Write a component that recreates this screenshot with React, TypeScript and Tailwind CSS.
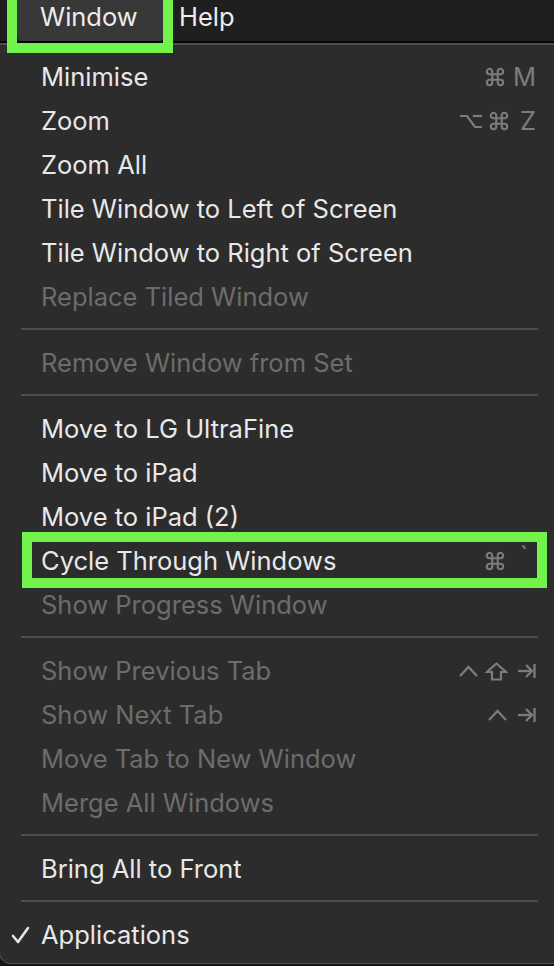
const font = { fontFamily: "Inter, 'Noto Sans', sans-serif" };

function CmdIcon() {
  return (
    <svg width="22" height="20" viewBox="0 0 24 22" fill="none" stroke="currentColor" strokeWidth="2.3" strokeLinecap="round" strokeLinejoin="round">
      <path d="M15 5v12a3 3 0 1 0 3-3H6a3 3 0 1 0 3 3V5a3 3 0 1 0-3 3h12a3 3 0 1 0-3-3" />
    </svg>
  );
}

function OptIcon() {
  return (
    <svg width="22" height="15" viewBox="0 0 22 15" fill="none" stroke="currentColor" strokeWidth="2.2" strokeLinecap="square">
      <path d="M1 2h6l8 11h6" />
      <path d="M14 2h7" />
    </svg>
  );
}

function CtrlIcon() {
  return (
    <svg width="19" height="12" viewBox="0 0 19 12" fill="none" stroke="currentColor" strokeWidth="2.3">
      <path d="M1 11 9.5 2 18 11" />
    </svg>
  );
}

function ShiftIcon() {
  return (
    <svg width="23" height="19" viewBox="0 0 23 19" fill="none" stroke="currentColor" strokeWidth="2.2" strokeLinejoin="miter">
      <path d="M11.5 1.5 21 10h-5v7.5H7V10H2z" />
    </svg>
  );
}

function TabIcon() {
  return (
    <svg width="19" height="16" viewBox="0 0 19 16" fill="none" stroke="currentColor" strokeWidth="2.3">
      <path d="M1 8h14" />
      <path d="M9 2l6 6-6 6" />
      <path d="M17.5 1v14" />
    </svg>
  );
}

function CheckIcon() {
  return (
    <svg width="19" height="18" viewBox="0 0 19 18" fill="none" stroke="currentColor" strokeWidth="2.6" strokeLinecap="round" strokeLinejoin="round">
      <path d="M2 10l5 6L17 2" />
    </svg>
  );
}

type Item = {
  label?: string;
  disabled?: boolean;
  sep?: boolean;
  checked?: boolean;
  marked?: boolean;
  keys?: React.ReactNode;
};

const items: Item[] = [
  {
    label: "Minimise",
    keys: (
      <>
        <CmdIcon />
        <span className="ml-[7px]">M</span>
      </>
    ),
  },
  {
    label: "Zoom",
    keys: (
      <>
        <OptIcon />
        <span className="ml-[6px]"><CmdIcon /></span>
        <span className="ml-[10px]">Z</span>
      </>
    ),
  },
  { label: "Zoom All" },
  { label: "Tile Window to Left of Screen" },
  { label: "Tile Window to Right of Screen" },
  { label: "Replace Tiled Window", disabled: true },
  { sep: true },
  { label: "Remove Window from Set", disabled: true },
  { sep: true },
  { label: "Move to LG UltraFine" },
  { label: "Move to iPad" },
  { label: "Move to iPad (2)" },
  {
    label: "Cycle Through Windows",
    marked: true,
    keys: (
      <>
        <CmdIcon />
        <span className="ml-[14px] mr-[8px] -mt-[10px]">`</span>
      </>
    ),
  },
  { label: "Show Progress Window", disabled: true },
  { sep: true },
  {
    label: "Show Previous Tab",
    disabled: true,
    keys: (
      <>
        <CtrlIcon />
        <span className="ml-[7px]"><ShiftIcon /></span>
        <span className="ml-[9px]"><TabIcon /></span>
      </>
    ),
  },
  {
    label: "Show Next Tab",
    disabled: true,
    keys: (
      <>
        <CtrlIcon />
        <span className="ml-[10px]"><TabIcon /></span>
      </>
    ),
  },
  { label: "Move Tab to New Window", disabled: true },
  { label: "Merge All Windows", disabled: true },
  { sep: true },
  { label: "Bring All to Front" },
  { sep: true },
  { label: "Applications", checked: true },
];

export default function App() {
  return (
    <div className="w-[554px] h-[966px] overflow-hidden bg-[#161616] text-[25.5px]" style={font}>
      {/* menu bar */}
      <div className="relative h-[41px] bg-[#1f1f1f] flex items-stretch">
        <div className="ml-[17px] w-[147px] rounded-b-[5px] bg-[#383838] text-[#ececec] pl-[23px] pb-[7px] flex items-center leading-none">
          Window
        </div>
        <div className="ml-[15px] pb-[7px] text-[#ececec] flex items-center leading-none">Help</div>
        <div className="absolute left-[7px] top-[-10px] w-[166px] h-[63px] border-[10px] border-[#72f34b] z-10" />
      </div>
      <div className="h-[2px] bg-[#050505]" />

      {/* dropdown */}
      <div className="-ml-px w-[570px] bg-[#2c2c2c] border-t-2 border-x border-b border-[#4e4e4e] rounded-b-[12px] pt-[10px] pb-[6px]">
        {items.map((it, i) =>
          it.sep ? (
            <div key={i} className="h-[22px] pt-[9px] pl-[21px] pr-[30px]">
              <div className="h-[2px] bg-[#4d4d4d]" />
            </div>
          ) : (
            <div key={i} className="relative h-[44px] flex items-center w-[555px] pr-[19px]">
              <div className="w-[41px] shrink-0 pl-[11px] text-[#e6e6e6] flex items-center">
                {it.checked && <CheckIcon />}
              </div>
              <span className={`leading-none ${it.disabled ? "text-[#6c6c6c]" : "text-[#e8e8e8]"}`}>
                {it.label}
              </span>
              {it.keys && (
                <div className="ml-auto flex items-center text-[#7c7c7c] leading-none">{it.keys}</div>
              )}
              {it.marked && (
                <div className="absolute left-[22px] top-[-7px] w-[525px] h-[56px] border-[10px] border-[#72f34b]" />
              )}
            </div>
          )
        )}
      </div>
    </div>
  );
}
